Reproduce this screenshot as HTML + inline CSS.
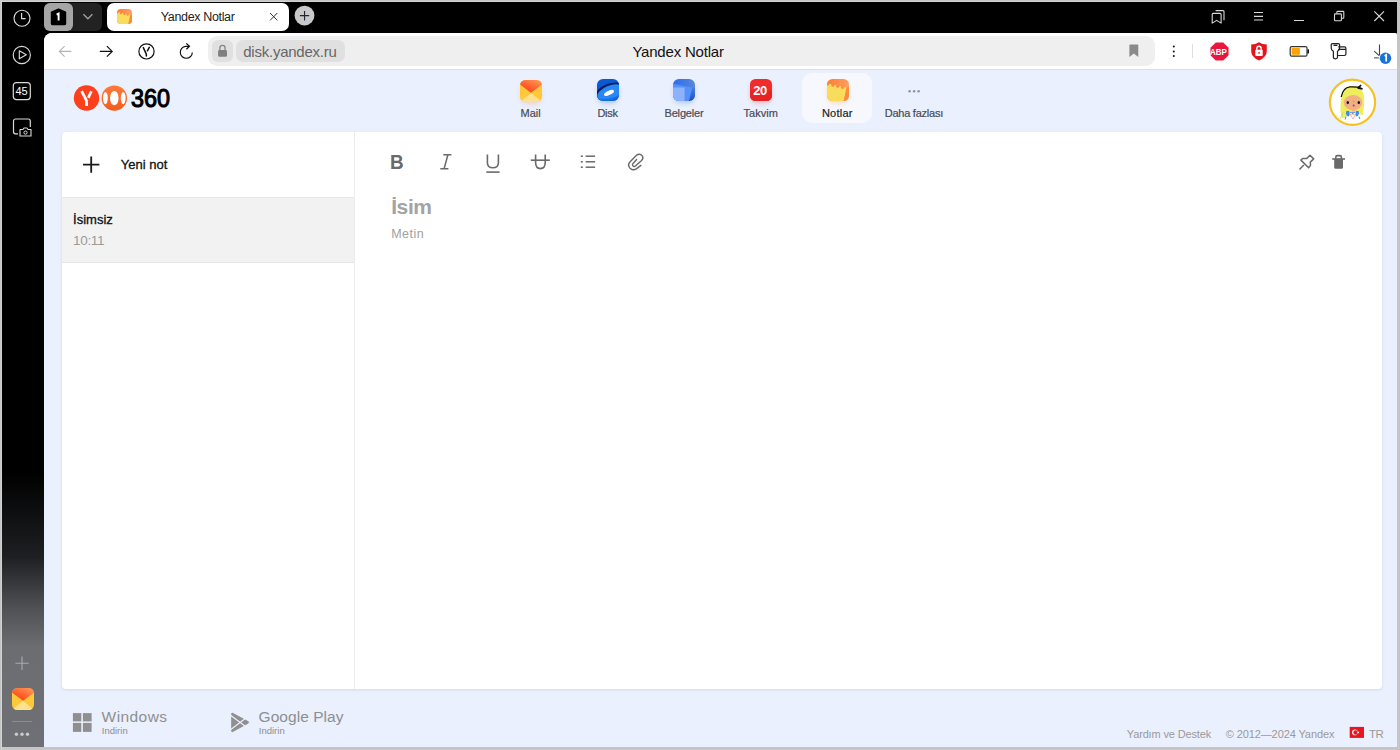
<!DOCTYPE html>
<html><head><meta charset="utf-8"><style>
*{box-sizing:border-box;margin:0;padding:0}
html,body{width:1400px;height:750px;overflow:hidden;background:#c5c5c5;font-family:"Liberation Sans",sans-serif}
.t{position:absolute;white-space:nowrap;line-height:1}
.b{position:absolute}
svg{position:absolute;overflow:visible}
</style></head><body>
<div class="b" style="left:0px;top:1px;width:1400px;height:1px;background:#d3d3d3"></div>
<div class="b" style="left:1px;top:0px;width:1px;height:750px;background:#d3d3d3"></div>
<div class="b" style="left:2px;top:2px;width:1395px;height:745px;background:#000"></div>
<div class="b" style="left:2px;top:2px;width:42px;height:745px;background:linear-gradient(#000 0px,#000 470px,#1e1f22 555px,#4e5054 605px,#6b6d71 645px,#6e7075 745px)"></div>
<div class="b" style="left:44px;top:33px;width:1353px;height:714px;background:#eaf0fd;border-top-left-radius:8px;border-top-right-radius:2px;overflow:hidden"></div>
<svg style="left:0px;top:0px;" width="44" height="40" viewBox="0 0 44 40"><circle cx="22" cy="18.2" r="8" fill="none" stroke="#dadada" stroke-width="1.15"/><path d="M21.6 13 V18.6 H25.6" fill="none" stroke="#dadada" stroke-width="1.15"/></svg>
<svg style="left:0px;top:40px;" width="44" height="30" viewBox="0 0 44 30"><circle cx="21.8" cy="15" r="8.6" fill="none" stroke="#dadada" stroke-width="1.15"/><path d="M19.3 10.8 L26.3 14.8 L19.3 18.8 Z" fill="none" stroke="#dadada" stroke-width="1.15" stroke-linejoin="round"/></svg>
<svg style="left:0px;top:80px;" width="44" height="24" viewBox="0 0 44 24"><rect x="13.3" y="2.6" width="17" height="17" rx="3" fill="none" stroke="#dadada" stroke-width="1.2"/></svg>
<div class="t" style="left:15.60px;top:85.99px;font-size:11px;color:#fff;font-weight:400;letter-spacing:-0.3px;">45</div>
<svg style="left:0px;top:115px;" width="44" height="25" viewBox="0 0 44 25"><path d="M18 18.8 H15.5 A2 2 0 0 1 13.5 16.8 V6 A2 2 0 0 1 15.5 4 H28.3 A2 2 0 0 1 30.3 6 V12" fill="none" stroke="#dadada" stroke-width="1.2"/><path d="M20 14.5 H23 L24 13 H27 L28 14.5 H31 V21 H20 Z" fill="#000" stroke="#dadada" stroke-width="1.1" stroke-linejoin="round"/><circle cx="25.5" cy="17.6" r="1.6" fill="none" stroke="#dadada" stroke-width="1"/></svg>
<svg style="left:0px;top:650px;" width="44" height="30" viewBox="0 0 44 30"><path d="M22 6.5 V20 M15.4 13.2 H28.7" stroke="#a9abae" stroke-width="1.1" fill="none"/></svg>
<svg style="left:12px;top:688px;" width="22" height="22" viewBox="0 0 22 22"><defs><linearGradient id="mg12688" x1="0.2" y1="0.9" x2="0.9" y2="0"><stop offset="0" stop-color="#ff3d14"/><stop offset="1" stop-color="#ff9a58"/></linearGradient><clipPath id="mc12688"><rect x="0" y="0" width="22" height="22" rx="5.5"/></clipPath></defs><g clip-path="url(#mc12688)"><rect width="22" height="22" fill="#ffc83a"/><path d="M0 22 L11 12.8 L22 22 Z" fill="#ffe08c"/><path d="M0 0 H22 V4.5 L11 12.8 L0 4.5 Z" fill="url(#mg12688)"/></g></svg>
<div class="b" style="left:12px;top:721px;width:20px;height:1px;background:#8a8c90"></div>
<svg style="left:0px;top:728px;" width="44" height="12" viewBox="0 0 44 12"><circle cx="16.4" cy="6.2" r="1.7" fill="#c9cacc"/><circle cx="22" cy="6.2" r="1.7" fill="#c9cacc"/><circle cx="27.5" cy="6.2" r="1.7" fill="#c9cacc"/></svg>
<div class="b" style="left:44px;top:3px;width:58px;height:28px;background:#222;border-radius:6px"></div>
<div class="b" style="left:44px;top:3px;width:29px;height:28px;background:#a6a6a6;border-radius:6px"></div>
<svg style="left:44px;top:3px;" width="29" height="28" viewBox="0 0 29 28"><path d="M7.7 9.3 L14.5 6.3 L21.3 9.3 V20.4 Q21.3 21.4 20.3 21.4 H8.7 Q7.7 21.4 7.7 20.4 Z" fill="#000" stroke="#000" stroke-width="1.8" stroke-linejoin="round"/><path d="M12.6 11.7 L14.6 10.6 V17.4" fill="none" stroke="#fff" stroke-width="1.9"/></svg>
<svg style="left:73px;top:3px;" width="29" height="28" viewBox="0 0 29 28"><path d="M10.4 11.3 L14.9 15.8 L19.4 11.3" fill="none" stroke="#a0a0a0" stroke-width="1.3"/></svg>
<div class="b" style="left:107px;top:3px;width:182px;height:28px;background:#fff;border-radius:7px"></div>
<svg style="left:117px;top:9px;" width="15" height="15" viewBox="0 0 22 22"><defs><clipPath id="nc117009"><rect x="0" y="0" width="22" height="22" rx="5.5"/></clipPath><linearGradient id="ng117009" x1="0" y1="0" x2="1" y2="0.3"><stop offset="0" stop-color="#ff7a2e"/><stop offset="1" stop-color="#ffa266"/></linearGradient></defs><g clip-path="url(#nc117009)"><rect width="22" height="22" fill="url(#ng117009)"/><path d="M0 22 V4.2 L19.6 8.4 L16.7 22 Z" fill="#f9dc5c"/><circle cx="5.8" cy="6.1" r="1.7" fill="#ff8440"/><circle cx="10.7" cy="7.15" r="1.7" fill="#ff8a45"/><circle cx="15.6" cy="8.2" r="1.7" fill="#ff9048"/><circle cx="0.6" cy="5" r="1.5" fill="#ff8040"/><path d="M19.6 8.4 L16.7 22 H22 V8 Z" fill="#ff8a3a"/></g></svg>
<div class="t" style="left:160.80px;top:10.82px;font-size:12.5px;color:#222;font-weight:400;letter-spacing:-0.35px;">Yandex Notlar</div>
<svg style="left:265px;top:8px;" width="18" height="18" viewBox="0 0 18 18"><path d="M5.1 5.0 L12.3 12.4 M12.3 5.0 L5.1 12.4" stroke="#2a3240" stroke-width="1.0"/></svg>
<svg style="left:294px;top:5px;" width="22" height="22" viewBox="0 0 22 22"><circle cx="10.5" cy="10.6" r="9.9" fill="#c9c9c9"/><path d="M10.55 6 V15.4 M5.9 10.6 H15.2" stroke="#1e2836" stroke-width="1.15"/></svg>
<svg style="left:1205px;top:5px;" width="26" height="24" viewBox="0 0 26 24"><path d="M10.6 5.6 H18 Q19 5.6 19 6.6 V15.3" fill="none" stroke="#d8d8d8" stroke-width="1.1"/><path d="M7.2 9.4 Q7.2 8.4 8.2 8.4 H15.1 Q16.1 8.4 16.1 9.4 V18.1 L11.65 15.4 L7.2 18.1 Z" fill="none" stroke="#d8d8d8" stroke-width="1.1" stroke-linejoin="round"/></svg>
<svg style="left:1250px;top:5px;" width="18" height="24" viewBox="0 0 18 24"><path d="M4 7.5 H13 M4 11.4 H13 M4 15 H13" stroke="#d8d8d8" stroke-width="1.1"/></svg>
<div class="b" style="left:1294px;top:20px;width:10px;height:1px;background:#d8d8d8"></div>
<svg style="left:1330px;top:5px;" width="20" height="22" viewBox="0 0 20 22"><rect x="4.5" y="8.9" width="6.9" height="6.9" rx="0.8" fill="none" stroke="#d8d8d8" stroke-width="1.1"/><path d="M6.9 8.5 V7.1 Q6.9 6.4 7.6 6.4 H13.1 Q13.8 6.4 13.8 7.1 V12.6 Q13.8 13.3 13.1 13.3 H11.8" fill="none" stroke="#d8d8d8" stroke-width="1.1"/></svg>
<svg style="left:1370px;top:7px;" width="18" height="18" viewBox="0 0 18 18"><path d="M4.3 4.3 L14 14 M14 4.3 L4.3 14" stroke="#d8d8d8" stroke-width="1.1"/></svg>
<div class="b" style="left:44px;top:33px;width:1353px;height:36px;background:#fff;border-top-left-radius:8px;border-top-right-radius:2px"></div>
<div class="b" style="left:44px;top:69px;width:1353px;height:1px;background:#d9dff0"></div>
<svg style="left:56px;top:44px;" width="18" height="16" viewBox="0 0 18 16"><path d="M3.3 7.4 H15.4 M8.6 2.1 L3.3 7.4 L8.6 12.7" fill="none" stroke="#b4b4b4" stroke-width="1.1"/></svg>
<svg style="left:97px;top:44px;" width="18" height="16" viewBox="0 0 18 16"><path d="M2.8 7.4 H15.2 M9.9 2.1 L15.2 7.4 L9.9 12.7" fill="none" stroke="#111" stroke-width="1.2"/></svg>
<svg style="left:136px;top:41px;" width="22" height="22" viewBox="0 0 22 22"><circle cx="10.5" cy="10.4" r="7.6" fill="none" stroke="#111" stroke-width="1.2"/><path d="M7.3 6.6 L10.1 12.6 Q10.5 13.6 10.4 15 M13.3 6.3 L11.4 9.8" fill="none" stroke="#111" stroke-width="1.5" stroke-linecap="round"/></svg>
<svg style="left:176px;top:41px;" width="22" height="22" viewBox="0 0 22 22"><path d="M16.3 11.4 A6 6 0 1 1 9.6 5.3 H13.2" fill="none" stroke="#111" stroke-width="1.2"/><path d="M10.3 2.4 L13.4 5.3 L10.4 8.2" fill="none" stroke="#111" stroke-width="1.3"/></svg>
<div class="b" style="left:208px;top:36px;width:947px;height:30px;background:#efefef;border-radius:9px"></div>
<div class="b" style="left:212px;top:40px;width:21px;height:22px;background:#e0e0e0;border-radius:6px"></div>
<svg style="left:212px;top:40px;" width="21" height="22" viewBox="0 0 21 22"><path d="M7.9 10.2 V8 A2.6 2.6 0 0 1 13.1 8 V10.2" fill="none" stroke="#858585" stroke-width="1.3"/><rect x="6.1" y="10" width="8.9" height="6.8" rx="1.4" fill="#7f7f7f"/></svg>
<div class="b" style="left:236px;top:40px;width:109px;height:22px;background:#e0e0e0;border-radius:7px"></div>
<div class="t" style="left:243.20px;top:43.70px;font-size:15px;color:#666;font-weight:400;letter-spacing:-0.23px;">disk.yandex.ru</div>
<div class="t" style="left:632.40px;top:44.00px;font-size:15px;color:#111;font-weight:400;letter-spacing:-0.2px;">Yandex Notlar</div>
<svg style="left:1126px;top:42px;" width="16" height="18" viewBox="0 0 16 18"><path d="M3.4 3.2 Q3.4 2.6 4 2.6 H11.6 Q12.3 2.6 12.3 3.2 V15 L7.85 11.6 L3.4 15 Z" fill="#8a8a8a"/></svg>
<svg style="left:1168px;top:42px;" width="12" height="18" viewBox="0 0 12 18"><circle cx="5.8" cy="4.6" r="1.0" fill="#111"/><circle cx="5.8" cy="9.4" r="1.0" fill="#111"/><circle cx="5.8" cy="13.9" r="1.0" fill="#111"/></svg>
<div class="b" style="left:1192px;top:44px;width:1px;height:14px;background:#dedede"></div>
<svg style="left:1209.5px;top:41.8px;" width="19" height="19" viewBox="0 0 19 19"><polygon points="18.55,13.25 13.25,18.55 5.75,18.55 0.45,13.25 0.45,5.75 5.75,0.45 13.25,0.45 18.55,5.75" fill="#e8173f"/></svg>
<div class="t" style="left:1210.40px;top:47.65px;font-size:8.8px;color:#fff;font-weight:700;letter-spacing:0px;transform:scaleX(0.9);transform-origin:0 0">ABP</div>
<svg style="left:1250px;top:41px;" width="18" height="20" viewBox="0 0 18 20"><path d="M9 1.2 Q12.5 3.3 16.8 3.6 V10.2 Q16.8 16 9 19.5 Q1.2 16 1.2 10.2 V3.6 Q5.5 3.3 9 1.2 Z" fill="#e8141b"/><path d="M6.8 9 V7.5 A2.2 2.2 0 0 1 11.2 7.5 V9" fill="none" stroke="#fff" stroke-width="1.4"/><rect x="5.3" y="8.8" width="7.4" height="6.3" rx="0.8" fill="#fff"/><circle cx="9" cy="11.8" r="0.9" fill="#e8141b"/></svg>
<svg style="left:1288px;top:44px;" width="22" height="14" viewBox="0 0 22 14"><rect x="2.2" y="2.6" width="16.8" height="9.6" rx="1.5" fill="none" stroke="#333" stroke-width="1.2"/><rect x="19.4" y="5.4" width="1.6" height="4" fill="#111"/><rect x="3.6" y="4" width="8.3" height="6.8" fill="#ffa200"/></svg>
<svg style="left:1328px;top:42px;" width="22" height="20" viewBox="0 0 22 20"><path d="M3.2 3 Q3.2 1.6 4.6 1.6 H10.2 Q11.6 1.6 11.6 3 V6.4 Q11.6 8 9.5 9.2 V15.3 Q9.5 16.8 7.45 16.8 Q5.4 16.8 5.4 15.3 V9.2 Q3.3 8 3.3 6.4 Z" fill="none" stroke="#222" stroke-width="1.25" stroke-linejoin="round"/><path d="M5.5 3.3 H9.4" stroke="#222" stroke-width="1.4"/><path d="M10.2 4.9 H16.5 Q17.9 4.9 17.9 6.3 V12.1 Q17.9 13.5 16.5 13.5 H9.6 M10 7.3 H17.9" fill="none" stroke="#222" stroke-width="1.2"/></svg>
<svg style="left:1368px;top:42px;" width="26" height="24" viewBox="0 0 26 24"><path d="M11.5 2.4 V13.6 M6.2 9.2 L11.1 13.6" fill="none" stroke="#444" stroke-width="1.1"/><path d="M6 15.8 H10.8" stroke="#8a8a8a" stroke-width="1.6"/><circle cx="17.5" cy="16.3" r="5.75" fill="#1a73dc"/><path d="M16.6 14 L18.2 12.9 V19.6" fill="none" stroke="#fff" stroke-width="1.7"/></svg>
<svg style="left:73px;top:85px;" width="27" height="27" viewBox="0 0 27 27"><circle cx="13.5" cy="13" r="12.7" fill="#fc3f1d"/><path d="M8.6 6.2 L13.4 15.3 L13.6 21" fill="none" stroke="#fff" stroke-width="2.8"/><path d="M18.3 6.2 L15.3 12.9" fill="none" stroke="#fff" stroke-width="2.7"/></svg>
<svg style="left:101px;top:85px;" width="27" height="27" viewBox="0 0 27 27"><defs><linearGradient id="lg2" x1="0" y1="0" x2="0" y2="1"><stop offset="0" stop-color="#ff7a3a"/><stop offset="1" stop-color="#f25c1f"/></linearGradient></defs><circle cx="13.3" cy="13.1" r="12.7" fill="url(#lg2)"/><ellipse cx="4.4" cy="13.1" rx="2.4" ry="6.2" fill="#fff"/><ellipse cx="13.3" cy="13.1" rx="4.3" ry="7.2" fill="#fff"/><ellipse cx="22.2" cy="13.1" rx="2.4" ry="6.2" fill="#fff"/></svg>
<div class="t" style="left:130.90px;top:85.19px;font-size:26px;color:#000;font-weight:400;letter-spacing:0px;transform:scaleX(0.9);transform-origin:0 0;-webkit-text-stroke:1.1px #000">360</div>
<div class="b" style="left:802px;top:73px;width:70px;height:50px;background:#f6f8fd;border-radius:10px"></div>
<div class="b" style="left:521px;top:82px;width:20px;height:20px;border-radius:6px;box-shadow:0 2px 5px rgba(255,120,40,0.25)"></div>
<svg style="left:520px;top:80px;" width="22" height="22" viewBox="0 0 22 22"><defs><linearGradient id="mg520080" x1="0.2" y1="0.9" x2="0.9" y2="0"><stop offset="0" stop-color="#ff3d14"/><stop offset="1" stop-color="#ff9a58"/></linearGradient><clipPath id="mc520080"><rect x="0" y="0" width="22" height="22" rx="5.5"/></clipPath></defs><g clip-path="url(#mc520080)"><rect width="22" height="22" fill="#ffc83a"/><path d="M0 22 L11 12.8 L22 22 Z" fill="#ffe08c"/><path d="M0 0 H22 V4.5 L11 12.8 L0 4.5 Z" fill="url(#mg520080)"/></g></svg>
<div class="b" style="left:598px;top:81px;width:20px;height:20px;border-radius:6px;box-shadow:0 2px 5px rgba(30,90,230,0.3)"></div>
<svg style="left:597px;top:79px;" width="22" height="22" viewBox="0 0 22 22"><defs><clipPath id="dc"><rect width="22" height="22" rx="6"/></clipPath></defs><g clip-path="url(#dc)"><rect width="22" height="22" fill="#0b5ad2"/><ellipse cx="12.6" cy="12.2" rx="14.5" ry="7.6" transform="rotate(-21 12.6 12.2)" fill="#061e66"/><ellipse cx="13.4" cy="13.6" rx="14" ry="7" transform="rotate(-21 13.4 13.6)" fill="#2a88f6"/><path d="M0 22 L0 19 Q10 22 22 16 V22 Z" fill="#1468de" opacity="0.7"/><ellipse cx="12" cy="13.9" rx="5.4" ry="2.1" transform="rotate(-24 12 13.9)" fill="#fff"/></g></svg>
<div class="b" style="left:674px;top:81px;width:20px;height:20px;border-radius:6px;box-shadow:0 2px 5px rgba(40,110,240,0.3)"></div>
<svg style="left:673px;top:79px;" width="22" height="22" viewBox="0 0 22 22"><defs><clipPath id="bc"><rect width="22" height="22" rx="6"/></clipPath><linearGradient id="bg1" x1="0" y1="0" x2="1" y2="0"><stop offset="0" stop-color="#2c6cf0"/><stop offset="1" stop-color="#5887d8"/></linearGradient><linearGradient id="bg2" x1="0" y1="0" x2="0" y2="1"><stop offset="0" stop-color="#4a7fe0"/><stop offset="1" stop-color="#1a50c8"/></linearGradient></defs><g clip-path="url(#bc)"><rect width="22" height="22" fill="url(#bg1)"/><path d="M19.2 8.6 L22 9 V22 H15.8 Z" fill="url(#bg2)"/><path d="M0 4.8 L19.2 8.6 L15.8 22 H0 Z" fill="#5590fb"/><path d="M0 8.6 H11.6 V22 H0 Z" fill="#8db2fb"/></g></svg>
<div class="b" style="left:751px;top:81px;width:20px;height:20px;border-radius:6px;box-shadow:0 2px 5px rgba(230,40,40,0.3)"></div>
<svg style="left:750px;top:79px;" width="22" height="22" viewBox="0 0 22 22"><defs><clipPath id="tc"><rect width="22" height="22" rx="5.5"/></clipPath></defs><g clip-path="url(#tc)"><rect width="22" height="22" fill="#f22b2b"/><rect y="11.5" width="22" height="10.5" fill="#e62424"/></g></svg>
<div class="t" style="left:753.30px;top:84.20px;font-size:13px;color:#fff;font-weight:700;letter-spacing:-0.45px;">20</div>
<div class="b" style="left:828px;top:81px;width:20px;height:20px;border-radius:6px;box-shadow:0 2px 5px rgba(255,140,40,0.3)"></div>
<svg style="left:827px;top:79.4px;" width="22" height="22" viewBox="0 0 22 22"><defs><clipPath id="nc827079"><rect x="0" y="0" width="22" height="22" rx="5.5"/></clipPath><linearGradient id="ng827079" x1="0" y1="0" x2="1" y2="0.3"><stop offset="0" stop-color="#ff7a2e"/><stop offset="1" stop-color="#ffa266"/></linearGradient></defs><g clip-path="url(#nc827079)"><rect width="22" height="22" fill="url(#ng827079)"/><path d="M0 22 V4.2 L19.6 8.4 L16.7 22 Z" fill="#f9dc5c"/><circle cx="5.8" cy="6.1" r="1.7" fill="#ff8440"/><circle cx="10.7" cy="7.15" r="1.7" fill="#ff8a45"/><circle cx="15.6" cy="8.2" r="1.7" fill="#ff9048"/><circle cx="0.6" cy="5" r="1.5" fill="#ff8040"/><path d="M19.6 8.4 L16.7 22 H22 V8 Z" fill="#ff8a3a"/></g></svg>
<svg style="left:905px;top:85px;" width="20" height="12" viewBox="0 0 20 12"><circle cx="4.6" cy="6.2" r="1.25" fill="#8f929a"/><circle cx="9.1" cy="6.2" r="1.25" fill="#8f929a"/><circle cx="13.6" cy="6.2" r="1.25" fill="#8f929a"/></svg>
<div class="t" style="left:520.60px;top:107.89px;font-size:11px;color:#4a4a55;font-weight:400;letter-spacing:-0.04px;-webkit-text-stroke:0.2px #4a4a55">Mail</div>
<div class="t" style="left:597.40px;top:107.89px;font-size:11px;color:#4a4a55;font-weight:400;letter-spacing:-0.27px;-webkit-text-stroke:0.2px #4a4a55">Disk</div>
<div class="t" style="left:664.50px;top:107.89px;font-size:11px;color:#4a4a55;font-weight:400;letter-spacing:-0.17px;-webkit-text-stroke:0.2px #4a4a55">Belgeler</div>
<div class="t" style="left:743.50px;top:107.89px;font-size:11px;color:#4a4a55;font-weight:400;letter-spacing:0.04px;-webkit-text-stroke:0.2px #4a4a55">Takvim</div>
<div class="t" style="left:821.90px;top:107.89px;font-size:11px;color:#222;font-weight:400;letter-spacing:0.24px;-webkit-text-stroke:0.2px #222">Notlar</div>
<div class="t" style="left:884.70px;top:107.89px;font-size:11px;color:#4a4a55;font-weight:400;letter-spacing:-0.24px;-webkit-text-stroke:0.2px #4a4a55">Daha fazlası</div>
<svg style="left:1328px;top:78px;" width="50" height="50" viewBox="0 0 50 50"><defs><clipPath id="avc"><circle cx="24.5" cy="24.2" r="22"/></clipPath></defs><circle cx="24.5" cy="24.2" r="22.6" fill="#fff" stroke="#f7c21c" stroke-width="2.2"/><g clip-path="url(#avc)"><path d="M13 22 Q12.5 12 19 9 Q26 6.5 32 10 Q36.5 14 36.2 22 Q36 31 35 37 L30 36 L19 38 Q16 41 13.5 40 Q11.8 32 13 22 Z" fill="#eeed5e"/><path d="M14.8 36 Q13 39 12.2 40.8 M13.8 38 Q13.5 35 16 34" fill="none" stroke="#d8d86a" stroke-width="0.8"/><ellipse cx="25" cy="24.6" rx="9.3" ry="7.6" fill="#f2b183"/><path d="M15.2 21 Q16 12 24 11.5 Q33 12 34.6 22 Q33 17.5 27 16.8 Q20 17 15.2 21 Z" fill="#eeed5e"/><path d="M13.2 19 Q15 9.5 22 8.9 Q29 8.6 33 10.2" fill="none" stroke="#111" stroke-width="1.3"/><path d="M29.5 10 L33.2 7.2 M29.5 10 L34.6 10.9" stroke="#111" stroke-width="1.6"/><circle cx="18.6" cy="26.4" r="1.5" fill="#f4a0a8"/><circle cx="32" cy="26" r="1.5" fill="#f4a0a8"/><ellipse cx="19.8" cy="24.5" rx="1.2" ry="1.6" fill="#111"/><ellipse cx="30.8" cy="24.5" rx="1.2" ry="1.6" fill="#111"/><path d="M25.3 22.5 Q26.4 23.6 25.4 24.4" fill="none" stroke="#b06a50" stroke-width="0.5"/><circle cx="25.7" cy="27.6" r="1.1" fill="#e0306a"/><rect x="23.8" y="31.5" width="3.4" height="2.5" fill="#f2b183"/><path d="M18 33.5 Q20 31.8 22 34 L21 38.5 Q18.6 38.5 18 36 Z M30.9 33.5 Q28.9 31.8 26.9 34 L27.9 38.5 Q30.3 38.5 30.9 36 Z" fill="#3a8ef5"/><path d="M21.6 33.6 H28 L27.6 36.2 H22 Z" fill="#fff"/><rect x="22" y="33.8" width="5.6" height="1" fill="#4a90f0"/><path d="M22 36.2 H27.6 L25 41 Z" fill="#fff" stroke="#f08060" stroke-width="0.6"/><circle cx="24.8" cy="35.4" r="0.6" fill="#e03040"/><path d="M18 38.5 L17.2 41.5 M31 38.5 L31.8 41" stroke="#3a8ef5" stroke-width="1"/></g></svg>
<div class="b" style="left:62px;top:132px;width:1320px;height:557px;background:#fff;border-radius:4px;box-shadow:0 1px 3px rgba(40,60,120,0.13)"></div>
<div class="b" style="left:354px;top:132px;width:1px;height:557px;background:#ececec"></div>
<svg style="left:82px;top:155px;" width="18" height="18" viewBox="0 0 18 18"><path d="M9.2 1.4 V17.8 M1 9.6 H17.4" stroke="#1a1a1a" stroke-width="1.8"/></svg>
<div class="t" style="left:120.80px;top:158.30px;font-size:13px;color:#111;font-weight:400;letter-spacing:0px;-webkit-text-stroke:0.3px #111">Yeni not</div>
<div class="b" style="left:62px;top:197px;width:292px;height:1px;background:#e6e6e6"></div>
<div class="b" style="left:62px;top:198px;width:292px;height:64px;background:#f2f2f2"></div>
<div class="b" style="left:62px;top:262px;width:292px;height:1px;background:#e6e6e6"></div>
<div class="t" style="left:73.10px;top:213.00px;font-size:13px;color:#111;font-weight:400;letter-spacing:0px;-webkit-text-stroke:0.3px #111">İsimsiz</div>
<div class="t" style="left:73.10px;top:234.17px;font-size:13.5px;color:#9a9a9a;font-weight:400;letter-spacing:-0.35px;">10:11</div>
<div class="t" style="left:390.40px;top:151.22px;font-size:21px;color:#6a6a6a;font-weight:700;letter-spacing:0px;transform:scaleX(0.9);transform-origin:0 0">B</div>
<svg style="left:436px;top:150px;" width="20" height="24" viewBox="0 0 20 24"><path d="M7.3 4.7 H15.4 M4.3 18.8 H12.4 M11.9 4.7 L8.1 18.8" stroke="#6a6a6a" stroke-width="1.5" fill="none"/></svg>
<svg style="left:483px;top:150px;" width="20" height="24" viewBox="0 0 20 24"><path d="M4.4 4.6 V12.8 Q4.4 17.8 9.9 17.8 Q15.4 17.8 15.4 12.8 V4.6" stroke="#6a6a6a" stroke-width="1.6" fill="none"/><path d="M3.3 22.1 H16.6" stroke="#6a6a6a" stroke-width="1.6"/></svg>
<svg style="left:530px;top:150px;" width="22" height="24" viewBox="0 0 22 24"><path d="M5.6 4.6 V12.6 Q5.6 18.6 10.4 18.6 Q15.2 18.6 15.2 12.6 V4.6" stroke="#6a6a6a" stroke-width="1.6" fill="none"/><path d="M0.8 10.2 H19.8" stroke="#6a6a6a" stroke-width="1.6"/></svg>
<svg style="left:578px;top:150px;" width="20" height="24" viewBox="0 0 20 24"><rect x="2.8" y="5.4" width="2" height="1.6" fill="#6a6a6a"/><path d="M7.6 6.2 H17.1" stroke="#6a6a6a" stroke-width="1.5"/><rect x="2.8" y="11.0" width="2" height="1.6" fill="#6a6a6a"/><path d="M7.6 11.8 H17.1" stroke="#6a6a6a" stroke-width="1.5"/><rect x="2.8" y="16.4" width="2" height="1.6" fill="#6a6a6a"/><path d="M7.6 17.2 H17.1" stroke="#6a6a6a" stroke-width="1.5"/></svg>
<svg style="left:624px;top:151px;" width="22" height="22" viewBox="0 0 22 22"><path d="M16.9 14.4 L12.3 17.9 C9.5 19.6 6.2 18.6 5.0 15.8 C4.3 14.1 4.6 12.3 5.9 11.1 L11.7 5.0 C13.6 3.0 16.5 2.6 18.1 4.6 C19.2 6.0 18.9 8.1 17.6 9.4 L11.4 15.0 C10.4 15.9 9.0 15.6 8.6 14.4 C8.3 13.6 8.5 12.9 9.0 12.4 L12.6 8.5" stroke="#6a6a6a" stroke-width="1.4" fill="none" stroke-linecap="round"/></svg>
<svg style="left:1294px;top:150px;" width="24" height="24" viewBox="0 0 24 24"><path d="M5.4 19.5 L9.9 14.9" stroke="#6a6a6a" stroke-width="1.5"/><path d="M6.9 10.1 L8.6 8.5 L12.6 8.6 L16 5.3 L19.7 8.9 L16.3 12.1 L16.5 15.4 L14.6 17.8 Z" fill="none" stroke="#6a6a6a" stroke-width="1.5" stroke-linejoin="round"/></svg>
<svg style="left:1328px;top:150px;" width="22" height="22" viewBox="0 0 22 22"><path d="M4.2 9 H17" stroke="#6a6a6a" stroke-width="1.6"/><path d="M7.8 9 V7.2 Q7.8 5.6 9.4 5.6 H11.8 Q13.4 5.6 13.4 7.2 V9" stroke="#6a6a6a" stroke-width="1.6" fill="none"/><path d="M6.2 9 H15 V17.2 Q15 18.7 13.5 18.7 H7.7 Q6.2 18.7 6.2 17.2 Z" fill="#6a6a6a"/></svg>
<div class="t" style="left:391.20px;top:196.42px;font-size:21px;color:#a3a3a3;font-weight:700;letter-spacing:-0.4px;">İsim</div>
<div class="t" style="left:391.20px;top:227.62px;font-size:12.5px;color:#a0a0a0;font-weight:400;letter-spacing:0.5px;">Metin</div>
<svg style="left:72px;top:711px;" width="22" height="22" viewBox="0 0 22 22"><rect x="0.9" y="2.1" width="8.4" height="8.3" fill="#8f8f8f"/><rect x="10.9" y="2.1" width="8.7" height="8.3" fill="#8f8f8f"/><rect x="0.9" y="11.9" width="8.4" height="9" fill="#8f8f8f"/><rect x="10.9" y="11.9" width="8.7" height="9" fill="#8f8f8f"/></svg>
<div class="t" style="left:101.60px;top:708.78px;font-size:15.5px;color:#8f8f8f;font-weight:400;letter-spacing:0.42px;">Windows</div>
<div class="t" style="left:101.80px;top:725.96px;font-size:9.5px;color:#8f8f8f;font-weight:400;letter-spacing:0px;">Indirin</div>
<svg style="left:229px;top:711px;" width="22" height="22" viewBox="0 0 22 22"><path d="M2.6 2.6 Q2.9 1.8 3.8 2.3 L19.2 10.6 Q20.2 11.4 19.2 12.2 L3.8 20.6 Q2.9 21.1 2.6 20.3 Z" fill="#8f8f8f" stroke="#8f8f8f" stroke-width="0.8" stroke-linejoin="round"/><path d="M1.2 3.9 L16.6 15.6 M1.2 18.9 L16.6 7.2" fill="none" stroke="#eaf0fd" stroke-width="1.2"/></svg>
<div class="t" style="left:258.60px;top:708.78px;font-size:15.5px;color:#8f8f8f;font-weight:400;letter-spacing:0.05px;">Google Play</div>
<div class="t" style="left:258.80px;top:725.96px;font-size:9.5px;color:#8f8f8f;font-weight:400;letter-spacing:0px;">Indirin</div>
<div class="t" style="left:1126.80px;top:728.89px;font-size:11px;color:#9a9a9a;font-weight:400;letter-spacing:-0.15px;">Yardım ve Destek</div>
<div class="t" style="left:1225.70px;top:728.89px;font-size:11px;color:#9a9a9a;font-weight:400;letter-spacing:-0.1px;">© 2012—2024 Yandex</div>
<svg style="left:1349px;top:726px;" width="16" height="12" viewBox="0 0 16 12"><rect x="0.7" y="0.9" width="14.3" height="11" fill="#e8141e"/><circle cx="5.9" cy="6.4" r="2.8" fill="#fff"/><circle cx="6.6" cy="6.4" r="2.25" fill="#e8141e"/><circle cx="9.2" cy="6.4" r="0.95" fill="#fff"/></svg>
<div class="t" style="left:1369.00px;top:729.47px;font-size:11.5px;color:#9a9a9a;font-weight:400;letter-spacing:-0.4px;">TR</div>
</body></html>
